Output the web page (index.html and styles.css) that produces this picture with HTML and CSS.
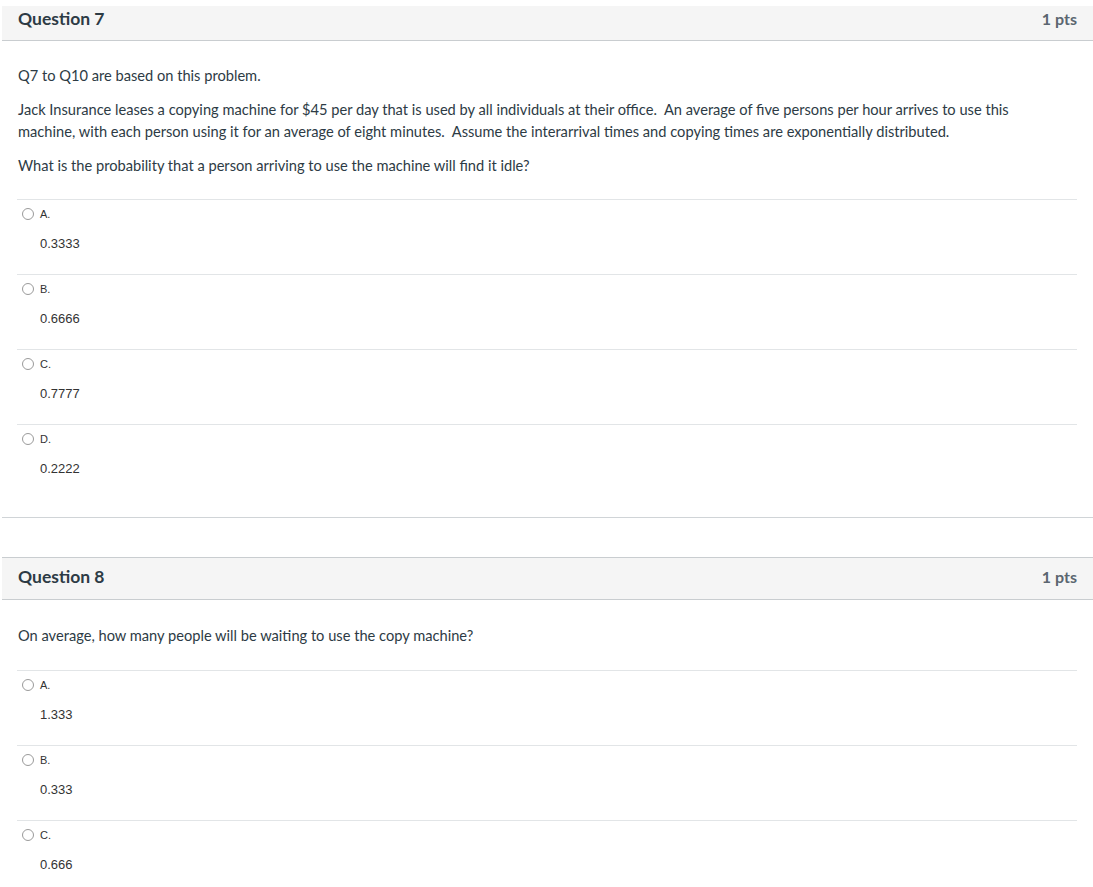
FILE: index.html
```html
<!DOCTYPE html>
<html lang="en">
<head>
<meta charset="utf-8">
<title>Quiz</title>
<link rel="stylesheet" href="styles.css">
</head>
<body>
<div class="question question-first">
  <div class="q-header">
    <span class="q-title">Question 7</span>
    <span class="q-pts">1 pts</span>
  </div>
  <div class="q-body">
    <div class="q-text">
      <p>Q7 to Q10 are based on this problem.</p>
      <p>Jack Insurance leases a copying machine for $45 per day that is used by all individuals at their office.&nbsp; An average of five persons per hour arrives to use this machine, with each person using it for an average of eight minutes.&nbsp; Assume the interarrival times and copying times are exponentially distributed.</p>
      <p>What is the probability that a person arriving to use the machine will find it idle?</p>
    </div>
    <div class="answers">
      <div class="answer"><div class="answer-row"><span class="radio"></span><span class="letter">A.</span></div><div class="value">0.3333</div></div>
      <div class="answer"><div class="answer-row"><span class="radio"></span><span class="letter">B.</span></div><div class="value">0.6666</div></div>
      <div class="answer"><div class="answer-row"><span class="radio"></span><span class="letter">C.</span></div><div class="value">0.7777</div></div>
      <div class="answer"><div class="answer-row"><span class="radio"></span><span class="letter">D.</span></div><div class="value">0.2222</div></div>
    </div>
  </div>
</div>

<div class="question question-next">
  <div class="q-header">
    <span class="q-title">Question 8</span>
    <span class="q-pts">1 pts</span>
  </div>
  <div class="q-body">
    <div class="q-text">
      <p>On average, how many people will be waiting to use the copy machine?</p>
    </div>
    <div class="answers">
      <div class="answer"><div class="answer-row"><span class="radio"></span><span class="letter">A.</span></div><div class="value">1.333</div></div>
      <div class="answer"><div class="answer-row"><span class="radio"></span><span class="letter">B.</span></div><div class="value">0.333</div></div>
      <div class="answer"><div class="answer-row"><span class="radio"></span><span class="letter">C.</span></div><div class="value">0.666</div></div>
    </div>
  </div>
</div>
</body>
</html>
```

FILE: styles.css
```css
html, body {
  margin: 0;
  padding: 0;
  background: #ffffff;
  overflow: hidden;
}

body {
  font-family: Lato, "Open Sans", "Liberation Sans", sans-serif;
  color: #2d3b45;
}

.question {
  margin-left: 2px;
  margin-top: 39px;
  border-bottom: 1px solid #d0d4d7;
}

.question-first {
  margin-top: 0;
}

.q-header {
  display: flex;
  justify-content: space-between;
  align-items: center;
  box-sizing: border-box;
  height: 43px;
  padding: 0 16px 3px 16px;
  background: #f5f5f5;
  border-top: 1px solid #c9cdd0;
  border-bottom: 1px solid #c9cdd0;
}

.question-first .q-header {
  margin-top: 6px;
  border-top: none;
  height: 35px;
  align-items: flex-start;
  padding-top: 0;
  padding-bottom: 0;
}

.question-first .q-title,
.question-first .q-pts {
  margin-top: 3px;
}

.q-title {
  font-weight: 700;
  font-size: 17.5px;
  line-height: 20px;
  color: #2d3b45;
}

.q-pts {
  font-weight: 700;
  font-size: 16px;
  line-height: 20px;
  color: #5b6670;
}

.q-body {
  padding: 24px 16px 18px 15px;
}

.question-next .q-body {
  padding-top: 25px;
}

.question-next .answers {
  margin-top: 23px;
}

.q-text {
  max-width: 1020px;
  padding-left: 1px;
  font-size: 14.65px;
  line-height: 22px;
  color: #2d3b45;
}

.q-text p {
  margin: 0 0 12px 0;
}

.q-text p:last-child {
  margin-bottom: 0;
}

.answers {
  margin-top: 22px;
}

.answer {
  border-top: 1px solid #e2e5e7;
  padding: 6px 0 21px 0;
}

.answer-row {
  display: flex;
  align-items: center;
  height: 16px;
}

.radio {
  display: inline-block;
  box-sizing: border-box;
  width: 12px;
  height: 12px;
  border: 1px solid #9a9a9a;
  border-radius: 50%;
  margin-left: 5px;
  margin-right: 6px;
  background: #fff;
}

.letter {
  font-family: "Liberation Sans", Arial, sans-serif;
  font-size: 11px;
  color: #333333;
}

.value {
  margin-top: 13px;
  margin-left: 23px;
  font-family: "Liberation Sans", Arial, sans-serif;
  font-size: 13px;
  line-height: 18px;
  color: #333333;
}
```
